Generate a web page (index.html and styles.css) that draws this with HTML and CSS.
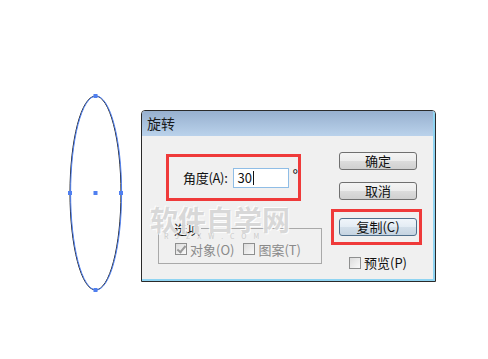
FILE: index.html
```html
<!DOCTYPE html>
<html lang="zh-CN">
<head>
    <meta charset="UTF-8">
    <title>旋转</title>
    <link rel="stylesheet" href="styles.css">
</head>
<body>
    <div class="stage">
        <svg class="shape" width="62" height="206" viewBox="0 0 62 206">
            <ellipse cx="31.5" cy="103" rx="25.5" ry="97" fill="none" stroke="#1a1a1a" stroke-width="1"/>
            <ellipse cx="31.5" cy="103" rx="25.5" ry="97" fill="none" stroke="#4f7ff0" stroke-width="1" transform="translate(0.6 0)"/>
            <rect x="29.5" y="4" width="4" height="4" fill="#4f7ff0"/>
            <rect x="29.5" y="198" width="4" height="4" fill="#4f7ff0"/>
            <rect x="4" y="101" width="4" height="4" fill="#4f7ff0"/>
            <rect x="55" y="101" width="4" height="4" fill="#4f7ff0"/>
            <rect x="29.5" y="101" width="4" height="4" fill="#4f7ff0"/>
        </svg>

        <div class="dialog">
            <div class="titlebar">旋转</div>
            <div class="dialog-body">
                <div class="left">
                    <div class="mark angle">
                        <span class="label">角度(A):</span>
                        <span class="field">30<i class="caret"></i></span>
                        <span class="deg">°</span>
                    </div>

                    <div class="group">
                        <span class="group-title">选项</span>
                        <div class="options">
                            <span class="check checked"></span>
                            <span class="opt">对象(O)</span>
                            <span class="check"></span>
                            <span class="opt">图案(T)</span>
                        </div>
                    </div>
                </div>

                <div class="right">
                    <button class="btn first">确定</button>
                    <button class="btn">取消</button>
                    <div class="mark copy">
                        <button class="btn default">复制(C)</button>
                    </div>
                    <div class="preview">
                        <span class="check"></span>
                        <span>预览(P)</span>
                    </div>
                </div>

                <div class="watermark">软件自学网<small>RJZXW.COM</small></div>
            </div>
        </div>
    </div>
</body>
</html>
```

FILE: styles.css
```css
body {
    margin: 0;
    background: #fff;
    font-family: "Noto Sans CJK SC", "Liberation Sans", sans-serif;
    font-size: 13px;
    color: #111;
}

.stage {
    display: flex;
    align-items: flex-start;
    padding: 90px 0 0 64px;
}

.shape {
    flex: none;
    display: block;
}

.dialog {
    flex: none;
    margin: 20px 0 0 15px;
    width: 293px;
    border: 1px solid #2a2a2a;
    border-radius: 4px 4px 0 0;
    overflow: hidden;
}

.titlebar {
    height: 25px;
    line-height: 25px;
    padding-left: 5px;
    font-size: 14px;
    color: #1a1a1a;
    background: linear-gradient(#97b0cf, #bad2eb);
    border-right: 2px solid #8fd4f2;
}

.dialog-body {
    position: relative;
    display: flex;
    height: 143px;
    background: #f0f0f0;
    border-right: 2px solid #8fd4f2;
    border-bottom: 2px solid #8fd4f2;
}

.left {
    width: 189px;
    flex: none;
}

.mark {
    border: 3px solid #ef3a3a;
    box-sizing: border-box;
}

.angle {
    display: flex;
    align-items: center;
    width: 135px;
    height: 47px;
    margin: 18px 0 0 24px;
    padding-left: 14px;
    white-space: nowrap;
}

.label {
    flex: none;
    letter-spacing: -0.3px;
}

.field {
    flex: none;
    display: flex;
    align-items: center;
    width: 56px;
    height: 20px;
    box-sizing: border-box;
    margin-left: 5px;
    padding-left: 4px;
    background: #fff;
    border: 1px solid #8fbde6;
}

.caret {
    width: 1px;
    height: 14px;
    margin-left: 1px;
    background: #111;
}

.deg {
    flex: none;
    margin-left: 4px;
    margin-top: -6px;
    font-size: 15px;
}

.group {
    width: 164px;
    height: 36px;
    box-sizing: border-box;
    margin: 27px 0 0 16px;
    border: 1px solid #a9a9a9;
}

.group-title {
    display: block;
    width: fit-content;
    margin: -8px 0 0 14px;
    padding: 0 1px;
    line-height: 15px;
    background: #f0f0f0;
}

.options {
    display: flex;
    align-items: center;
    height: 14px;
    margin-top: 6px;
    padding-left: 16px;
    color: #8a8a8a;
    white-space: nowrap;
}

.check {
    flex: none;
    width: 12px;
    height: 12px;
    box-sizing: border-box;
    border: 1px solid #8e8f8f;
    background: linear-gradient(135deg, #dcdcdc, #fafafa);
    margin-right: 3px;
    position: relative;
}

.checked::after {
    content: "";
    position: absolute;
    left: 3px;
    top: 0;
    width: 3px;
    height: 7px;
    border: solid #9a9a9a;
    border-width: 0 2px 2px 0;
    transform: rotate(40deg);
}

.opt {
    margin-right: 9px;
}

.right {
    display: flex;
    flex-direction: column;
    align-items: flex-start;
}

.btn {
    display: block;
    width: 78px;
    height: 18px;
    padding: 0;
    margin: 12px 0 0 8px;
    font-family: inherit;
    font-size: 13px;
    line-height: 16px;
    color: #111;
    border: 1px solid #707070;
    border-radius: 3px;
    background: linear-gradient(#f4f4f4 0%, #ececec 50%, #dcdcdc 51%, #d0d0d0 100%);
}

.btn.first {
    margin-top: 16px;
}

.copy {
    width: 91px;
    height: 36px;
    margin-top: 9px;
    padding: 6px 0 0 5px;
}

.copy .btn {
    margin: 0;
}

.btn.default {
    border-color: #4f6f8c;
    background: linear-gradient(#f0f5fa 0%, #e3ecf4 50%, #d3dfea 51%, #c6d4e1 100%);
}

.preview {
    display: flex;
    align-items: center;
    margin: 8px 0 0 18px;
}

.watermark {
    position: absolute;
    left: 8px;
    top: 69px;
    font-size: 28px;
    font-weight: bold;
    line-height: 28px;
    color: rgba(200, 200, 200, 0.7);
    text-shadow: 1px 1px 0 rgba(255, 255, 255, 0.9), -1px -1px 0 rgba(255, 255, 255, 0.9);
    pointer-events: none;
}

.watermark small {
    display: block;
    font-size: 7px;
    line-height: 7px;
    letter-spacing: 7px;
    padding-left: 14px;
    font-weight: normal;
    color: rgba(190, 190, 190, 0.8);
    text-shadow: none;
}
```
